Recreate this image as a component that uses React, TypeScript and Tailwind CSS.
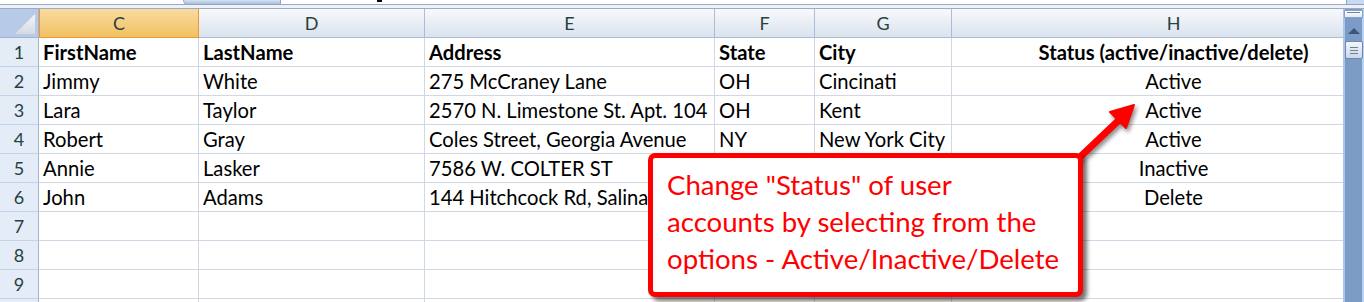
import React from 'react';

const cols = [
  { key: 'C', w: 160 },
  { key: 'D', w: 226 },
  { key: 'E', w: 290 },
  { key: 'F', w: 100 },
  { key: 'G', w: 137 },
  { key: 'H', w: 444 },
];

// F/G of rows 5-6 sit under the callout, so they stay blank
const rows: string[][] = [
  ['FirstName', 'LastName', 'Address', 'State', 'City', 'Status (active/inactive/delete)'],
  ['Jimmy', 'White', '275 McCraney Lane', 'OH', 'Cincinati', 'Active'],
  ['Lara', 'Taylor', '2570 N. Limestone St. Apt. 104', 'OH', 'Kent', 'Active'],
  ['Robert', 'Gray', 'Coles Street, Georgia Avenue', 'NY', 'New York City', 'Active'],
  ['Annie', 'Lasker', '7586 W. COLTER ST', '', '', 'Inactive'],
  ['John', 'Adams', '144 Hitchcock Rd, Salinas', '', '', 'Delete'],
  ['', '', '', '', '', ''],
  ['', '', '', '', '', ''],
  ['', '', '', '', '', ''],
  ['', '', '', '', '', ''],
];

const font = { fontFamily: 'Lato, "Open Sans", "Liberation Sans", sans-serif' };

const TopStrip = () => (
  <div className="relative h-[9px] w-full">
    <div className="h-[4px] bg-white" />
    <div className="h-[5px] border-y border-[#9aabc4] bg-[#eef2f8]" />
    <div className="absolute left-[183px] top-0 h-[5px] w-[98px] rounded-bl-[6px] border border-t-0 border-[#8ea5c6] bg-gradient-to-b from-[#d4e0f0] to-[#a9bfdd]" />
    <div className="absolute left-[377px] top-0 h-[2px] w-[5px] bg-black" />
    <div className="absolute right-0 top-0 h-[5px] w-[18px] border-l border-b border-[#8ea5c6] bg-[#c9d9ef]" />
  </div>
);

const HeaderRow = () => (
  <div className="flex h-[29px]">
    <div className="relative h-full w-[39px] shrink-0 border-r border-b border-[#9eb6ce] bg-[#b7cbe8]">
      <svg className="absolute inset-0" width="39" height="28" viewBox="0 0 39 28">
        <defs>
          <linearGradient id="tri" x1="0" y1="0" x2="0" y2="1">
            <stop offset="0" stopColor="#f4f6f9" />
            <stop offset="1" stopColor="#d5dae2" />
          </linearGradient>
        </defs>
        <polygon points="15,25 35,5 35,25" fill="url(#tri)" />
      </svg>
    </div>
    {cols.map((c, i) => (
      <div
        key={c.key}
        style={{ width: c.w }}
        className={
          i === 0
            ? 'flex h-full shrink-0 items-center justify-center border border-t-0 border-[#f29536] bg-gradient-to-b from-[#f9dba0] to-[#f1c15f] text-[18px] text-[#27413e]'
            : 'flex h-full shrink-0 items-center justify-center border-r border-b border-[#a9bdd5] bg-gradient-to-b from-[#f7f9fc] to-[#dbe3ee] text-[18px] text-[#27413e]'
        }
      >
        {c.key}
      </div>
    ))}
  </div>
);

const Row = ({ n, cells }: { n: number; cells: string[] }) => (
  <div className="flex h-[29px]">
    <div className="flex h-full w-[39px] shrink-0 items-center justify-center border-r border-b border-r-[#9eb6ce] border-b-[#c5d3e6] bg-[#e4ecf7] text-[18px] text-[#27413e]">
      {n < 10 ? n : ''}
    </div>
    {cells.map((t, i) => (
      <div
        key={i}
        style={{ width: cols[i].w }}
        className={
          'flex h-full shrink-0 items-center overflow-hidden whitespace-nowrap border-r border-b border-[#d0d7e5] bg-white text-[20.2px] text-black ' +
          (i === 5 ? 'justify-center' : 'pl-[4px]') +
          (n === 1 ? ' font-bold' : '')
        }
      >
        {t}
      </div>
    ))}
  </div>
);

const ScrollBar = () => (
  <div className="flex h-full w-[21px] shrink-0 flex-col items-center border-l-2 border-r-2 border-l-[#a9c5ec] border-r-[#bad1f0] bg-[#7c9cc7]">
    <div className="mt-[1px] flex h-[8px] w-[19px] items-start justify-center border border-[#8aa2c3] bg-gradient-to-b from-white to-[#e4ebf5] pt-[1px]">
      <div className="h-[1px] w-[13px] bg-[#6d84a6]" />
    </div>
    <svg className="mt-[10px]" width="12" height="6" viewBox="0 0 12 6">
      <polygon points="0,6 6,0 12,6" fill="#3e5577" />
    </svg>
    <div className="mt-[7px] flex h-[18px] w-[18px] flex-col items-center justify-center gap-[2px] rounded-[2px] border border-[#6f87ab] bg-gradient-to-b from-[#f4f7fb] to-[#cbd8ea]">
      <div className="h-[1px] w-[8px] bg-[#6f7f96]" />
      <div className="h-[1px] w-[8px] bg-[#6f7f96]" />
      <div className="h-[1px] w-[8px] bg-[#6f7f96]" />
    </div>
  </div>
);

const Arrow = () => (
  <svg
    className="absolute left-[1070px] top-[95px]"
    width="75"
    height="75"
    viewBox="1070 95 75 75"
    style={{ filter: 'drop-shadow(2px 3px 2px rgba(0,0,0,0.45))' }}
  >
    <line x1="1080" y1="157" x2="1119" y2="120" stroke="#ff0000" strokeWidth="7" strokeLinecap="round" />
    <polygon points="1134,105 1126,128 1110,112" fill="#ff0000" stroke="#ff0000" strokeWidth="2" strokeLinejoin="round" />
  </svg>
);

export default function App() {
  return (
    <div className="relative h-[302px] w-[1364px] overflow-hidden bg-white" style={font}>
      <TopStrip />
      <div className="flex h-[293px]">
        <div className="w-[1343px] shrink-0 overflow-hidden">
          <HeaderRow />
          {rows.map((r, i) => (
            <Row key={i} n={i + 1} cells={r} />
          ))}
        </div>
        <ScrollBar />
      </div>

      <Arrow />

      <div className="absolute left-[648px] top-[153px] h-[144px] w-[435px] rounded-[7px] border-[5px] border-[#ff0000] bg-white pl-[14px] pt-[8px] text-[27.6px] leading-[37px] text-[#ff0000] shadow-[4px_4px_4px_rgba(0,0,0,0.55)]">
        <div>Change "Status" of user</div>
        <div>accounts by selecting from the</div>
        <div>options - Active/Inactive/Delete</div>
      </div>
    </div>
  );
}
